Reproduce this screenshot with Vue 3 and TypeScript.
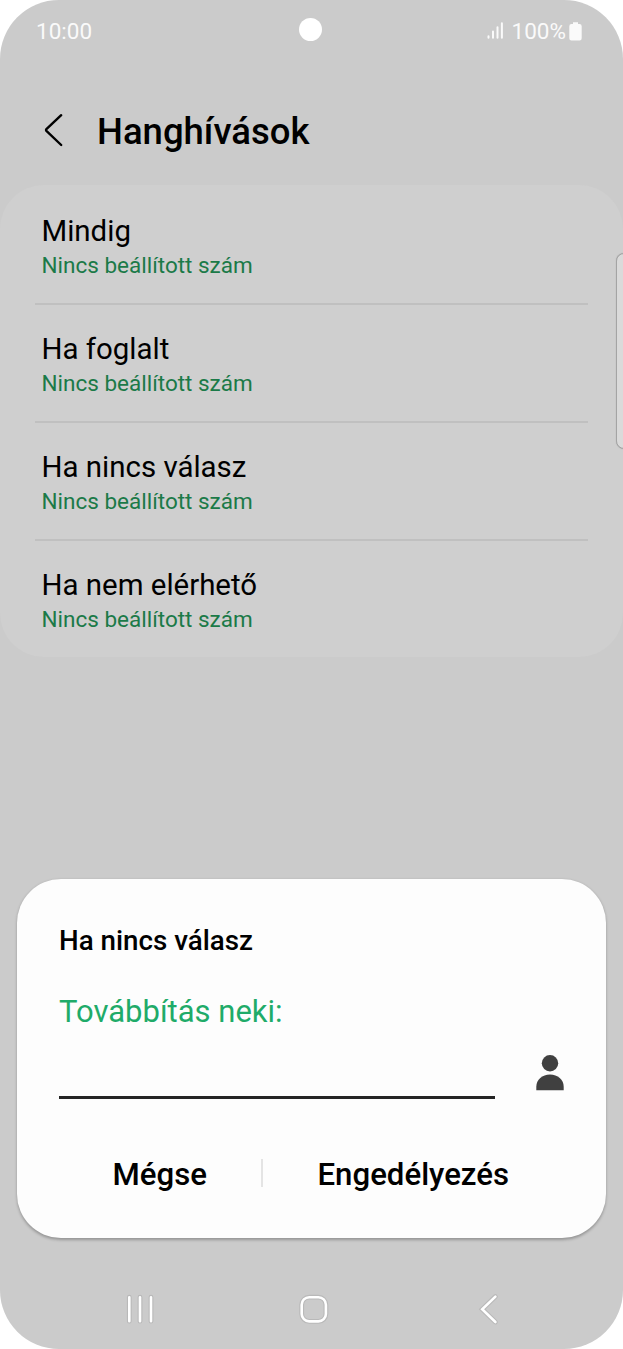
<script setup lang="ts">
interface ForwardRule {
  title: string
  detail: string
}

const rules: ForwardRule[] = [
  { title: 'Mindig', detail: 'Nincs beállított szám' },
  { title: 'Ha foglalt', detail: 'Nincs beállított szám' },
  { title: 'Ha nincs válasz', detail: 'Nincs beállított szám' },
  { title: 'Ha nem elérhető', detail: 'Nincs beállított szám' },
]
</script>

<template>
  <div class="screen">
    <div class="status">
      <span class="clock">10:00</span>
      <span class="indicators">
        <svg class="signal" width="18" height="18" viewBox="0 0 18 18">
          <path d="M1.5 14.3v1.4M6 9.5v6.2M10.5 5.2v10.5M14.9 1.2v14.5" />
        </svg>
        <span class="level">100%</span>
        <svg class="battery" width="13" height="19" viewBox="0 0 13 19">
          <path d="M4 0.2h5v1.8h1.5a2.2 2.2 0 0 1 2.2 2.2v12a2.2 2.2 0 0 1-2.2 2.2h-8a2.2 2.2 0 0 1-2.2-2.2V4.2a2.2 2.2 0 0 1 2.2-2.2H4z" />
        </svg>
      </span>
      <span class="camera"></span>
    </div>

    <header class="header">
      <svg class="back" width="20" height="34" viewBox="0 0 20 34">
        <path d="M17.2 2.2 2.4 16.2a1.2 1.2 0 0 0 0 1.7L17.2 32" />
      </svg>
      <h1>Hanghívások</h1>
    </header>

    <main class="list">
      <section v-for="rule in rules" :key="rule.title" class="row">
        <div class="row-title">{{ rule.title }}</div>
        <div class="row-detail">{{ rule.detail }}</div>
      </section>
    </main>

    <div class="edge-handle"></div>

    <div class="dialog">
      <h2>Ha nincs válasz</h2>
      <div class="label">Továbbítás neki:</div>
      <div class="entry">
        <div class="field"></div>
        <svg class="person" width="28" height="36" viewBox="0 0 28 36">
          <circle cx="14" cy="8.2" r="8.2" />
          <path d="M0.3 35.3v-3.5C0.3 24.8 6.3 19.6 14 19.6s13.7 5.2 13.7 12.2v3.5z" />
        </svg>
      </div>
      <div class="actions">
        <span class="action cancel">Mégse</span>
        <span class="separator"></span>
        <span class="action enable">Engedélyezés</span>
      </div>
    </div>

    <nav class="nav">
      <svg class="recents" width="34" height="34" viewBox="0 0 34 34">
        <path class="halo" d="M6.3 5.2v24M17 5.2v24M28 5.2v24" />
        <path d="M6.3 5.2v24M17 5.2v24M28 5.2v24" />
      </svg>
      <svg class="home" width="34" height="34" viewBox="0 0 34 34">
        <rect class="halo" x="4.7" y="5.2" width="24.2" height="24.2" rx="7.5" />
        <rect x="4.7" y="5.2" width="24.2" height="24.2" rx="7.5" />
      </svg>
      <svg class="nav-back" width="24" height="34" viewBox="0 0 24 34">
        <path class="halo" d="M18.4 4.6 5.2 17.3l13.2 12.7" />
        <path d="M18.4 4.6 5.2 17.3l13.2 12.7" />
      </svg>
    </nav>
  </div>
</template>

<style>
body {
  margin: 0;
  background: #fff;
}
</style>

<style scoped>
.screen {
  position: relative;
  box-sizing: border-box;
  width: 623px;
  height: 1349px;
  overflow: hidden;
  border-radius: 59px;
  background: #cbcbcb;
  color: #000;
  font-family: Roboto, "Noto Sans", sans-serif;
}
.status {
  position: relative;
  display: flex;
  justify-content: space-between;
  align-items: center;
  height: 62px;
  padding: 0 41px 0 36px;
  color: #fafafa;
  font-size: 22.5px;
  line-height: 26px;
}
.indicators {
  display: flex;
  align-items: center;
}
.signal {
  margin-right: 7px;
  fill: none;
  stroke: #fafafa;
  stroke-width: 2;
  stroke-linecap: round;
}
.battery {
  margin-left: 3px;
  fill: #fafafa;
}
.camera {
  position: absolute;
  left: 299.4px;
  top: 18px;
  width: 23px;
  height: 23px;
  border-radius: 50%;
  background: #fff;
}
.header {
  display: flex;
  align-items: center;
  height: 123px;
  padding: 0 0 0 44px;
  box-sizing: border-box;
}
.back {
  margin: 12px 33px 0 0;
  fill: none;
  stroke: #000;
  stroke-width: 2.4;
  stroke-linecap: round;
}
h1 {
  margin: 16px 0 0;
  font-size: 36.5px;
  font-weight: 500;
  line-height: 43px;
}
.list {
  overflow: hidden;
  border-radius: 44px;
  background: #cfcfcf;
}
.row {
  position: relative;
  box-sizing: border-box;
  height: 118px;
  padding: 28px 41.5px 0;
}
.row + .row::before {
  content: "";
  position: absolute;
  left: 35px;
  right: 35px;
  top: 0;
  height: 2px;
  background: #c0c0c0;
}
.row-title {
  font-size: 29.45px;
  line-height: 36px;
}
.row-detail {
  margin-top: 2px;
  color: #1b7a48;
  font-size: 22.5px;
  line-height: 28px;
}
.edge-handle {
  position: absolute;
  left: 616px;
  top: 253px;
  box-sizing: border-box;
  width: 16px;
  height: 196px;
  border: 1px solid #a4a4a4;
  border-radius: 8px;
  background: #dadada;
  box-shadow: 0 0 1px #a4a4a4;
}
.dialog {
  box-sizing: border-box;
  width: 588.5px;
  height: 359px;
  margin: 222px 0 0 17.3px;
  padding: 45px 41.8px 0 41.7px;
  border-radius: 44px;
  background: #fdfdfd;
  box-shadow: 0 1.5px 3px rgba(0, 0, 0, 0.27);
}
h2 {
  margin: 0;
  font-size: 27.75px;
  font-weight: 500;
  line-height: 33px;
}
.label {
  margin-top: 36px;
  color: #1fab69;
  font-size: 31px;
  line-height: 37px;
}
.entry {
  display: flex;
  align-items: flex-start;
  justify-content: space-between;
  height: 73px;
}
.field {
  box-sizing: border-box;
  width: 436px;
  height: 69px;
  border-bottom: 3px solid #242424;
}
.person {
  margin-top: 24.5px;
  fill: #404040;
}
.actions {
  display: flex;
  align-items: center;
  height: 36px;
  margin: 52px 0 0 53.5px;
  font-size: 31.2px;
  font-weight: 500;
  line-height: 37px;
}
.action {
  padding-top: 3px;
}
.cancel {
  width: 149px;
}
.separator {
  width: 1.5px;
  height: 28px;
  margin-right: 54.5px;
  background: #e4e4e4;
}
.nav {
  display: flex;
  align-items: center;
  height: 34px;
  margin-top: 54px;
  padding-left: 123px;
}
.nav svg {
  fill: none;
  stroke: #fff;
  stroke-width: 2.6;
  stroke-linecap: round;
}
.nav .halo {
  stroke: #b9b9b9;
  stroke-width: 4.8;
}
.home {
  margin-left: 140.4px;
}
.nav-back {
  margin-left: 146px;
}
</style>
